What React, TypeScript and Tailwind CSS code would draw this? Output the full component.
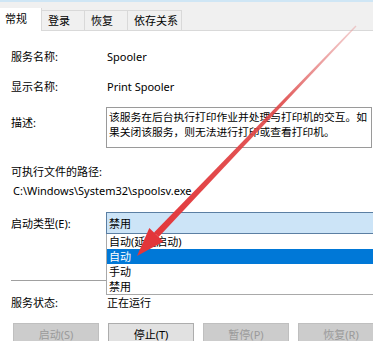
import React from 'react'

const FONT = { fontFamily: '"Noto Sans", "Noto Sans CJK SC", sans-serif' }

const TABS = ['常规', '登录', '恢复', '依存关系']
const TAB_WIDTHS = ['w-[42px]', 'w-[43px]', 'w-[43px]', 'w-[54px]']

const OPTIONS = ['自动(延迟启动)', '自动', '手动', '禁用']

const BUTTONS = [
  { label: '启动(S)', enabled: false },
  { label: '停止(T)', enabled: true },
  { label: '暂停(P)', enabled: false },
  { label: '恢复(R)', enabled: false },
]

function TabStrip() {
  return (
    <div>
      <div className="h-[2px] bg-[#cfe6f5]" />
      <div className="h-[29px] bg-[#f0f0f0] border-b border-[#d9d9d9] flex items-end">
        {TABS.map((t, i) =>
          i === 0 ? (
            <div
              key={t}
              className={`${TAB_WIDTHS[i]} h-[23px] -mb-px bg-white border-r border-[#d9d9d9] flex items-start pt-[3px] pl-[5px] leading-[15px]`}
            >
              {t}
            </div>
          ) : (
            <div
              key={t}
              className={`${TAB_WIDTHS[i]} h-[20px] border-r border-t border-[#d9d9d9] flex items-start pt-[2px] pl-[6px] leading-[15px]`}
            >
              {t}
            </div>
          ),
        )}
      </div>
    </div>
  )
}

function Row({ label, children, className = '' }: { label: string; children: React.ReactNode; className?: string }) {
  return (
    <div className={`flex leading-[15px] ${className}`}>
      <div className="w-[96px] shrink-0">{label}</div>
      <div>{children}</div>
    </div>
  )
}

function StartupCombo() {
  return (
    <div className="flex items-center mt-[14px]">
      <div className="w-[95px] shrink-0 leading-[15px]">启动类型(E):</div>
      <div className="relative w-[280px] h-[22px] shrink-0">
        <div className="h-full bg-[#cce4f7] border border-[#5b7fa3] flex items-center pl-[2px] leading-[15px]">禁用</div>
        <div className="absolute left-0 top-full w-full bg-white border-l border-b border-[#a9a9a9] z-10">
          {OPTIONS.map((o, i) => (
            <div
              key={o}
              className={`h-[15px] leading-[15px] pl-[2px] ${i === 1 ? 'bg-[#0078d7] text-white' : 'text-black'}`}
            >
              {o}
            </div>
          ))}
        </div>
      </div>
    </div>
  )
}

function Arrow() {
  return (
    <svg className="absolute inset-0 pointer-events-none z-20" width="373" height="341" viewBox="0 0 373 341">
      <defs>
        <linearGradient id="shaft" x1="356" y1="26" x2="150" y2="240" gradientUnits="userSpaceOnUse">
          <stop offset="0" stopColor="#e8a0a0" stopOpacity="0.5" />
          <stop offset="0.35" stopColor="#df4a4a" stopOpacity="0.9" />
          <stop offset="1" stopColor="#e3363a" />
        </linearGradient>
      </defs>
      <polygon points="356.5,26.5 355.5,25.5 154,232.6 158.6,237" fill="url(#shaft)" />
      <polygon points="137,256 163.5,241.5 149.3,228" fill="#e3363a" />
    </svg>
  )
}

export default function App() {
  return (
    <div className="relative w-[373px] h-[341px] overflow-hidden bg-white text-[11px] text-black" style={FONT}>
      <TabStrip />
      <div className="pl-[11px]">
        <Row label="服务名称:" className="mt-[18px]">Spooler</Row>
        <Row label="显示名称:" className="mt-[15px]">Print Spooler</Row>
        <div className="flex mt-[13px]">
          <div className="w-[95px] shrink-0 pt-[8px] leading-[15px]">描述:</div>
          <div className="w-[266px] h-[41px] border border-[#9a9a9a] pt-[2px] pl-[2px] text-[10.75px] leading-[15px]">
            该服务在后台执行打印作业并处理与打印机的交互。如果关闭该服务，则无法进行打印或查看打印机。
          </div>
        </div>
        <div className="mt-[16px] leading-[15px]">可执行文件的路径:</div>
        <div className="mt-[4px] leading-[15px] pl-[2px]">C:\Windows\System32\spoolsv.exe</div>
        <StartupCombo />
        <div className="mt-[46px] mr-[11px] h-px bg-[#a0a0a0]" />
        <Row label="服务状态:" className="mt-[14px]">正在运行</Row>
        <div className="flex gap-[9px] mt-[13px] pl-[2px]">
          {BUTTONS.map((b) => (
            <div
              key={b.label}
              className={`w-[86px] h-[23px] shrink-0 flex items-center justify-center border leading-[15px] ${
                b.enabled ? 'bg-[#e1e1e1] border-[#adadad] text-black' : 'bg-[#cccccc] border-[#bfbfbf] text-[#9a9a9a]'
              }`}
            >
              {b.label}
            </div>
          ))}
        </div>
      </div>
      <Arrow />
    </div>
  )
}
